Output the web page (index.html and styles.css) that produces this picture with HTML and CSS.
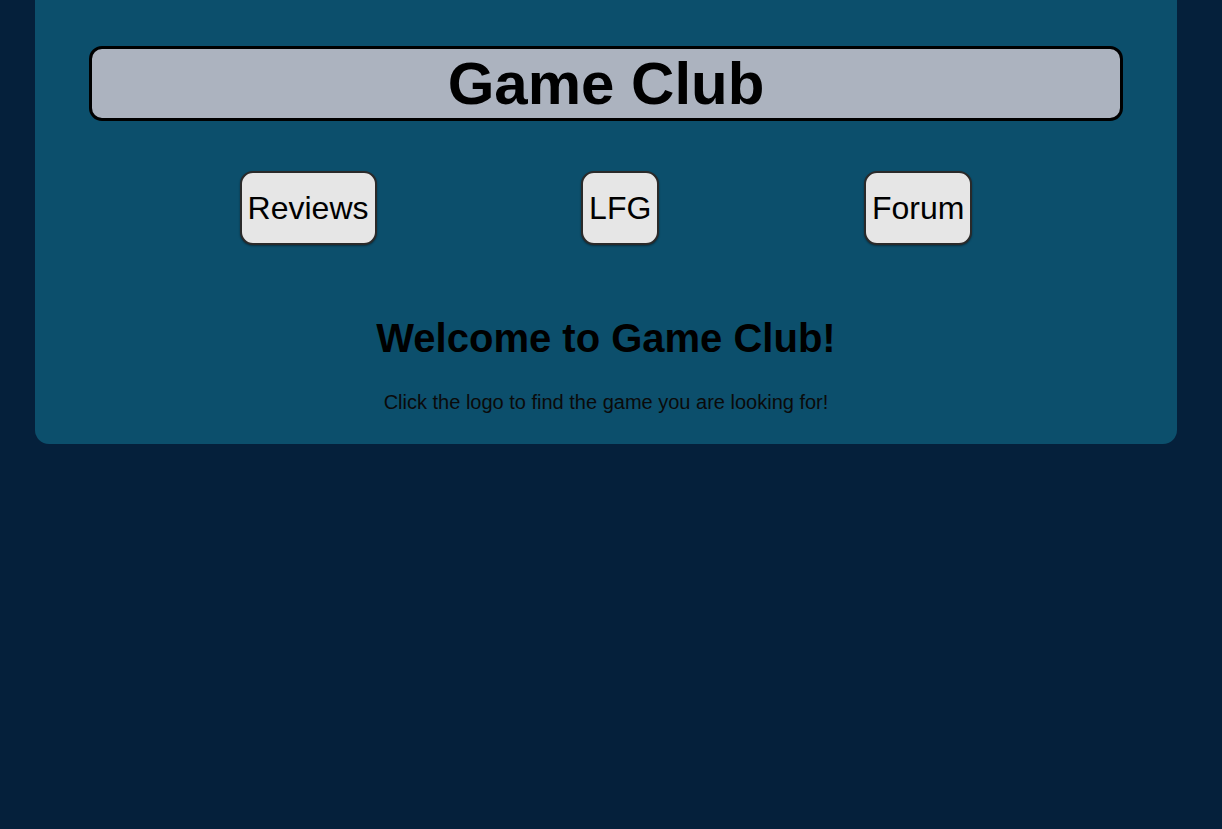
FILE: index.html
```html
<!DOCTYPE html>
<html lang="en">
<head>
<meta charset="utf-8">
<title>Game Club</title>
<link rel="stylesheet" href="styles.css">
</head>
<body>
<main class="card">
  <header class="banner"><h1 class="banner-title">Game Club</h1></header>
  <nav class="nav">
    <button class="nav-btn">Reviews</button>
    <button class="nav-btn">LFG</button>
    <button class="nav-btn">Forum</button>
  </nav>
  <section class="intro">
    <h2 class="intro-title">Welcome to Game Club!</h2>
    <p class="intro-text">Click the logo to find the game you are looking for!</p>
  </section>
</main>
</body>
</html>
```
FILE: styles.css
```css
html, body {
  margin: 0;
  padding: 0;
}
body {
  background: #05203b;
  font-family: "Liberation Sans", Arial, sans-serif;
  color: #000;
  min-height: 829px;
}
.card {
  background: #0c4f6c;
  margin: 0 45px 0 35px;
  padding: 46px 0 30px;
  border-radius: 0 0 14px 14px;
  display: flex;
  flex-direction: column;
}
.banner {
  margin: 0 54px;
  background: #acb3bf;
  border: 3px solid #000;
  border-radius: 13px;
}
.banner-title {
  margin: 0;
  font-size: 60px;
  line-height: 69px;
  font-weight: bold;
  text-align: center;
}
.nav {
  display: flex;
  justify-content: space-evenly;
  margin-top: 50px;
}
.nav-btn {
  font-family: "Liberation Sans", Arial, sans-serif;
  font-size: 32px;
  line-height: 37px;
  height: 74px;
  padding: 0 6px;
  background: #e6e6e6;
  color: #000;
  border: 2px solid #2a2a2a;
  border-radius: 13px;
  box-shadow: 0 1px 2px rgba(0,0,0,0.4);
}
.intro {
  text-align: center;
  margin-top: 70px;
}
.intro-title {
  margin: 0;
  font-size: 40px;
  line-height: 46px;
  font-weight: bold;
}
.intro-text {
  margin: 30px 0 0;
  font-size: 20px;
  line-height: 23px;
  color: #0a0a0a;
}
```
